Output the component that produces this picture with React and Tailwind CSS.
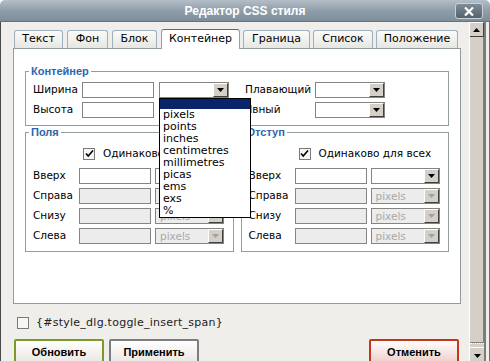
import React from 'react';

const tabs = [
  { label: 'Текст', w: 'w-[49px]' },
  { label: 'Фон', w: 'w-[41px]' },
  { label: 'Блок', w: 'w-[45px]' },
  { label: 'Контейнер', w: 'w-[79px]', active: true },
  { label: 'Граница', w: 'w-[67px]' },
  { label: 'Список', w: 'w-[60px]' },
  { label: 'Положение', w: 'w-[82px]' },
];

const units = ['pixels', 'points', 'inches', 'centimetres', 'millimetres', 'picas', 'ems', 'exs', '%'];

const Arrow = ({ disabled }) => (
  <span className="flex h-[14px] w-[15px] shrink-0 items-center justify-center border-t border-l border-t-white border-l-white border-r border-b border-r-[#404040] border-b-[#404040] bg-[#d4d0c8]">
    <svg width="7" height="4" viewBox="0 0 7 4">
      <path d="M0 0h7L3.5 4z" fill={disabled ? '#a0a0a0' : '#000'} />
    </svg>
  </span>
);

const Select = ({ value = '', disabled = false, width = 'w-[70px]', children }) => (
  <div className={`relative flex h-[16px] ${width} shrink-0 items-center border border-[#848484] ${disabled ? 'bg-[#ececec]' : 'bg-white'}`}>
    <span className={`flex-1 pl-[4px] leading-[14px] ${disabled ? 'text-[#a9a9a9]' : 'text-black'}`}>{value}</span>
    <Arrow disabled={disabled} />
    {children}
  </div>
);

const Input = ({ disabled = false }) => (
  <div className={`h-[16px] w-[72px] shrink-0 border border-[#848484] ${disabled ? 'bg-[#ececec]' : 'bg-white'}`} />
);

const Checkbox = ({ checked }) => (
  <span className="flex h-[12px] w-[12px] shrink-0 items-center justify-center border border-[#7a7a7a] bg-[#f6f6f4]">
    {checked && (
      <svg width="9" height="9" viewBox="0 0 9 9">
        <path d="M1 4.5l2.2 2.5L8 1.5" fill="none" stroke="#000" strokeWidth="1.6" />
      </svg>
    )}
  </span>
);

const Legend = ({ children }) => (
  <legend className="ml-[3px] px-[2px] font-['Liberation_Sans',sans-serif] text-[11px] font-bold leading-[13px] text-[#2a66b0]">
    {children}
  </legend>
);

const SideRow = ({ label, disabled }) => (
  <div className="flex h-[16px] items-center">
    <span className="w-[53px] shrink-0 pl-[7px] whitespace-nowrap">{label}</span>
    <Input disabled={disabled} />
    <div className="ml-[4px]">
      <Select width="w-[69px]" value={disabled ? 'pixels' : ''} disabled={disabled} />
    </div>
  </div>
);

const SideBox = ({ title }) => (
  <fieldset className="w-[209px] border border-[#939d9d]">
    <Legend>{title}</Legend>
    <div className="flex flex-col gap-[4px] pt-[8px] pb-[7px]">
      <div className="mb-[4px] flex h-[13px] items-center pl-[57px]">
        <Checkbox checked />
        <span className="ml-[8px]">Одинаково для всех</span>
      </div>
      <SideRow label="Вверх" />
      <SideRow label="Справа" disabled />
      <SideRow label="Снизу" disabled />
      <SideRow label="Слева" disabled />
    </div>
  </fieldset>
);

const Button = ({ children, border, className = '' }) => (
  <button
    className={`flex h-[24px] w-[90px] items-start justify-center rounded-[2px] border-2 ${border} bg-linear-to-b from-white to-[#ece8e4] pt-[3px] font-['Liberation_Sans',sans-serif] text-[11px] font-bold text-black ${className}`}
  >
    {children}
  </button>
);

export default function App() {
  return (
    <div className="relative flex h-[361px] w-[490px] flex-col overflow-hidden bg-white font-['DejaVu_Sans',sans-serif] text-[10.5px] text-black">
      {/* title bar */}
      <div className="relative flex h-[22px] shrink-0 items-center justify-center rounded-t-[5px] border-b border-[#66737d] bg-linear-to-b from-[#b4bec7] via-[#8f9eab] to-[#7d8e9b]">
        <span className="font-['Liberation_Sans',sans-serif] text-[12px] font-bold text-white">Редактор CSS стиля</span>
        <span className="absolute top-[3px] right-[7px] flex h-[16px] w-[28px] items-center justify-center rounded-[3px] border border-[#c9d0d6] bg-linear-to-b from-[#7d8d99] to-[#55636e]">
          <svg width="10" height="9" viewBox="0 0 10 9">
            <path d="M1 0.5l8 8M9 0.5l-8 8" stroke="#fff" strokeWidth="2.2" />
          </svg>
        </span>
      </div>

      <div className="flex flex-1 bg-[#efeeea]">
        {/* dialog body */}
        <div className="flex w-[469px] flex-col border-l border-[#4a4a4a] pt-[7px] pl-[12px]">
          <div className="flex h-[19px] items-end pl-[1px]">
            {tabs.map((t, i) => (
              <div
                key={t.label}
                className={`flex ${t.w} ${i === 0 ? '' : i > 3 ? 'ml-[3px]' : 'ml-[4px]'} items-center justify-center rounded-t-[3px] border-x border-t text-[11px] ${
                  t.active
                    ? 'relative z-10 -mb-[1px] h-[20px] border-[#8fa2b3] border-t-[#56697b] bg-white'
                    : 'h-[18px] border-[#9fb0bd] bg-linear-to-b from-[#fbfbfa] to-[#e6e6e1]'
                }`}
              >
                {t.label}
              </div>
            ))}
          </div>

          <div className="h-[256px] w-[448px] border border-[#919b9c] bg-white px-[11px]">
            <fieldset className="mt-[16px] border border-[#939d9d]">
              <Legend>Контейнер</Legend>
              <div className="flex flex-col gap-[4px] pt-[4px] pb-[7px] pl-[7px]">
                <div className="flex h-[16px] items-center">
                  <span className="w-[49px] shrink-0">Ширина</span>
                  <Input />
                  <div className="ml-[5px]">
                    <Select>
                      <div className="absolute top-[15px] -left-[1px] z-20 flex w-[92px] flex-col border border-black bg-white text-[11px]">
                        <div className="h-[10px] bg-[#0a246a]" />
                        {units.map((u) => (
                          <div key={u} className="h-[12px] pl-[3px] leading-[12px]">{u}</div>
                        ))}
                      </div>
                    </Select>
                  </div>
                  <span className="ml-[16px] w-[70px] shrink-0 whitespace-nowrap">Плавающий</span>
                  <Select />
                </div>
                <div className="flex h-[16px] items-center">
                  <span className="w-[49px] shrink-0">Высота</span>
                  <Input />
                  <div className="ml-[5px]">
                    <Select />
                  </div>
                  <span className="ml-[16px] w-[70px] shrink-0 whitespace-nowrap">Явный</span>
                  <Select />
                </div>
              </div>
            </fieldset>

            <div className="flex gap-[7px]">
              <SideBox title="Поля" />
              <SideBox title="Отступ" />
            </div>
          </div>

          <div className="mt-[13px] flex h-[12px] items-center pl-[4px]">
            <Checkbox />
            <span className="ml-[7px] text-[11px] tracking-[0.25px] text-[#222]">{'{#style_dlg.toggle_insert_span}'}</span>
          </div>

          <div className="mt-[10px] flex pl-[1px]">
            <Button border="border-[#7b9a2a]">Обновить</Button>
            <Button border="border-[#7d7d7d]" className="ml-[5px]">Применить</Button>
            <Button border="border-[#c4381a]" className="ml-auto mr-[10px] from-[#fff4f2] to-[#f0d2cc]">Отменить</Button>
          </div>
        </div>

        {/* scrollbar */}
        <div className="flex w-[17px] flex-col border-l border-white border-r-2 border-r-[#7c7c7c] bg-[#d4d0c8]">
          <div className="flex h-[15px] items-center justify-center border-r border-b border-[#404040] border-t border-t-white">
            <svg width="7" height="4" viewBox="0 0 7 4">
              <path d="M3.5 0L7 4H0z" fill="#000" />
            </svg>
          </div>
          <div className="flex-1 border-r border-b border-[#808080]" />
          <div className="h-[4px] border-t border-dotted border-white" />
          <div className="flex h-[16px] items-center justify-center border-t border-white">
            <svg width="7" height="4" viewBox="0 0 7 4">
              <path d="M0 0h7L3.5 4z" fill="#000" />
            </svg>
          </div>
        </div>
        <div className="w-[4px] border-r border-[#6e6e6e] bg-[#efeeea]" />
      </div>
    </div>
  );
}
